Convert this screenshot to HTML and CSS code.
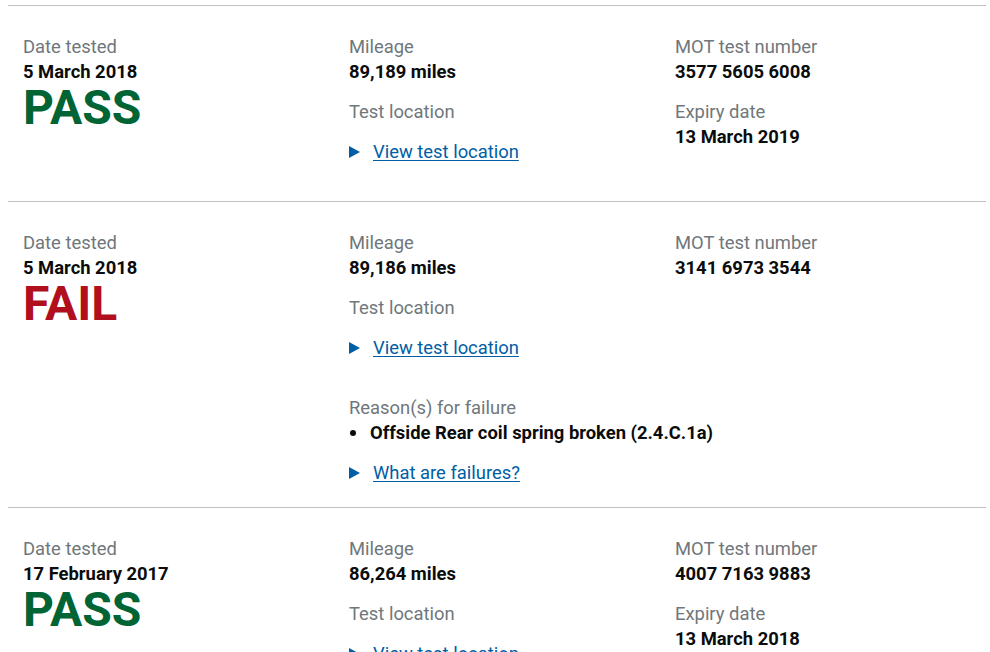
FILE: index.html
```html
<!DOCTYPE html>
<html lang="en">
<head>
  <meta charset="UTF-8">
  <meta name="viewport" content="width=device-width, initial-scale=1.0">
  <title>MOT history</title>
  <link rel="stylesheet" href="styles.css">
</head>
<body>
  <div class="mot-history">

    <section class="test-result">
      <div class="column">
        <dl class="field">
          <dt class="label">Date tested</dt>
          <dd class="value">5 March 2018</dd>
          <dd class="status status-pass">PASS</dd>
        </dl>
      </div>
      <div class="column">
        <dl class="field">
          <dt class="label">Mileage</dt>
          <dd class="value">89,189 miles</dd>
        </dl>
        <dl class="field">
          <dt class="label">Test location</dt>
        </dl>
        <details class="details details-location">
          <summary><span class="summary-text">View test location</span></summary>
        </details>
      </div>
      <div class="column">
        <dl class="field">
          <dt class="label">MOT test number</dt>
          <dd class="value">3577 5605 6008</dd>
        </dl>
        <dl class="field">
          <dt class="label">Expiry date</dt>
          <dd class="value">13 March 2019</dd>
        </dl>
      </div>
    </section>

    <section class="test-result">
      <div class="column">
        <dl class="field">
          <dt class="label">Date tested</dt>
          <dd class="value">5 March 2018</dd>
          <dd class="status status-fail">FAIL</dd>
        </dl>
      </div>
      <div class="column">
        <dl class="field">
          <dt class="label">Mileage</dt>
          <dd class="value">89,186 miles</dd>
        </dl>
        <dl class="field">
          <dt class="label">Test location</dt>
        </dl>
        <details class="details details-location">
          <summary><span class="summary-text">View test location</span></summary>
        </details>
        <dl class="field">
          <dt class="label">Reason(s) for failure</dt>
          <dd>
            <ul class="reasons">
              <li class="value">Offside Rear coil spring broken (2.4.C.1a)</li>
            </ul>
          </dd>
        </dl>
        <details class="details details-help">
          <summary><span class="summary-text">What are failures?</span></summary>
        </details>
      </div>
      <div class="column">
        <dl class="field">
          <dt class="label">MOT test number</dt>
          <dd class="value">3141 6973 3544</dd>
        </dl>
      </div>
    </section>

    <section class="test-result">
      <div class="column">
        <dl class="field">
          <dt class="label">Date tested</dt>
          <dd class="value">17 February 2017</dd>
          <dd class="status status-pass">PASS</dd>
        </dl>
      </div>
      <div class="column">
        <dl class="field">
          <dt class="label">Mileage</dt>
          <dd class="value">86,264 miles</dd>
        </dl>
        <dl class="field">
          <dt class="label">Test location</dt>
        </dl>
        <details class="details details-location">
          <summary><span class="summary-text">View test location</span></summary>
        </details>
      </div>
      <div class="column">
        <dl class="field">
          <dt class="label">MOT test number</dt>
          <dd class="value">4007 7163 9883</dd>
        </dl>
        <dl class="field">
          <dt class="label">Expiry date</dt>
          <dd class="value">13 March 2018</dd>
        </dl>
      </div>
    </section>

  </div>
</body>
</html>
```

FILE: styles.css
```css
* {
  box-sizing: border-box;
  margin: 0;
  padding: 0;
}

body {
  font-family: Roboto, "Liberation Sans", Arial, sans-serif;
  color: #0b0c0c;
  background: #fff;
  padding: 5px 4px 0 8px;
}

.mot-history {
  width: 978px;
}

.test-result {
  display: grid;
  grid-template-columns: repeat(3, minmax(0, 1fr));
  border-top: 1px solid #bfc1c3;
  padding: 28px 0 2px;
}

.column {
  padding: 0 15px;
}

.field {
  margin-bottom: 15px;
}

.label {
  font-size: 18.4px;
  line-height: 25px;
  color: #6f777b;
}

.value {
  font-size: 18.4px;
  line-height: 25px;
  font-weight: 700;
}

.status {
  font-size: 48px;
  line-height: 48px;
  font-weight: 700;
}

.status-pass {
  color: #006435;
}

.status-fail {
  color: #b10e1e;
}

/* reasons list with a small round bullet; long reasons run past the column */
.reasons {
  list-style: none;
  white-space: nowrap;
}

.reasons li::before {
  content: "";
  display: inline-block;
  width: 6px;
  height: 6px;
  border-radius: 50%;
  background: #0b0c0c;
  margin: 0 14px 2px 1px;
  vertical-align: middle;
}

/* expandable links */
.details {
  font-size: 18.4px;
  line-height: 25px;
}

.details-location {
  margin-bottom: 35px;
}

.details-help {
  margin-bottom: 20px;
}

.details summary {
  display: block;
  list-style: none;
  cursor: pointer;
  color: #005ea5;
}

.details summary::-webkit-details-marker {
  display: none;
}

.details summary::before {
  content: "";
  display: inline-block;
  width: 0;
  height: 0;
  border-style: solid;
  border-width: 6px 0 6px 11px;
  border-color: transparent transparent transparent #005ea5;
  margin: 0 13px 2px 0;
  vertical-align: middle;
}

.summary-text {
  text-decoration: underline;
  text-underline-offset: 2px;
}
```
